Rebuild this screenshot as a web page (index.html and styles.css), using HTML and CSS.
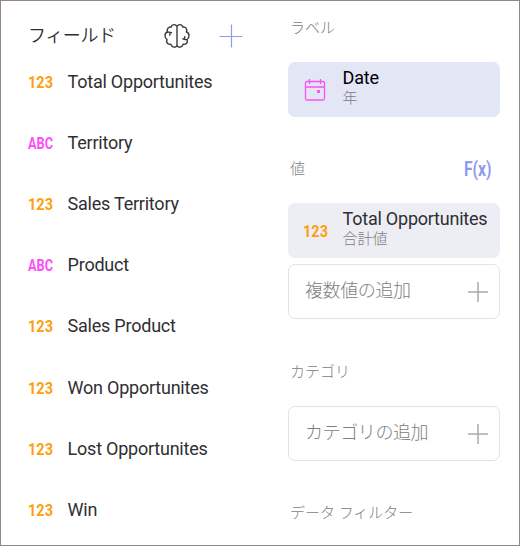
FILE: index.html
```html
<!DOCTYPE html>
<html lang="ja">
<head>
<meta charset="utf-8">
<title>フィールド</title>
<link rel="stylesheet" href="styles.css">
</head>
<body>
<main class="panel">
  <section class="fields">
    <header class="fields-header">
      <h1 class="title">フィールド</h1>
      <svg class="brain" viewBox="0 0 26 26"><path d="M13 3.500v19M13 3.500C11.500.8 8 1 7.200 4 4.500 3.500 2.500 6 3.500 9 .3 10 .2 14.500 3 16.500 1.800 19.500 4 21.800 6.800 21.300 8 24.800 12 25 13 22.500M13 3.500C14.500.8 18 1 18.800 4c2.700-.5 4.700 2 3.700 5 3.200 1 3.300 5.500.5 7.500 1.200 3-1 5.300-3.800 4.800-1.200 3.500-5.200 3.700-6.200 1.200M3.500 9.300c1.200-.3 2.500-.3 4 .4M5.800 12.300l.2-2.800M23 16.500c-1.400.3-3 .2-4.200-.8M20.500 16.300l.3-2.500"/></svg>
      <svg class="plus accent" viewBox="0 0 24 24"><path d="M12.500 .5v23M.5 12.500h23"/></svg>
    </header>
    <ul class="field-list">
      <li class="field"><svg class="badge num" viewBox="0 0 26 18"><text x="0" y="15" textLength="25" lengthAdjust="spacingAndGlyphs">123</text></svg><span>Total Opportunites</span></li>
      <li class="field"><svg class="badge abc" viewBox="0 0 26 18"><text x="0" y="15" textLength="25" lengthAdjust="spacingAndGlyphs">ABC</text></svg><span>Territory</span></li>
      <li class="field"><svg class="badge num" viewBox="0 0 26 18"><text x="0" y="15" textLength="25" lengthAdjust="spacingAndGlyphs">123</text></svg><span>Sales Territory</span></li>
      <li class="field"><svg class="badge abc" viewBox="0 0 26 18"><text x="0" y="15" textLength="25" lengthAdjust="spacingAndGlyphs">ABC</text></svg><span>Product</span></li>
      <li class="field"><svg class="badge num" viewBox="0 0 26 18"><text x="0" y="15" textLength="25" lengthAdjust="spacingAndGlyphs">123</text></svg><span>Sales Product</span></li>
      <li class="field"><svg class="badge num" viewBox="0 0 26 18"><text x="0" y="15" textLength="25" lengthAdjust="spacingAndGlyphs">123</text></svg><span>Won Opportunites</span></li>
      <li class="field"><svg class="badge num" viewBox="0 0 26 18"><text x="0" y="15" textLength="25" lengthAdjust="spacingAndGlyphs">123</text></svg><span>Lost Opportunites</span></li>
      <li class="field"><svg class="badge num" viewBox="0 0 26 18"><text x="0" y="15" textLength="25" lengthAdjust="spacingAndGlyphs">123</text></svg><span>Win</span></li>
    </ul>
  </section>
  <section class="config">
    <div class="group">
      <h2 class="label">ラベル</h2>
      <div class="card date">
        <svg class="calendar" viewBox="0 0 22 24"><rect x="1.500" y="3.500" width="19" height="18.500" rx="1.500"/><path d="M1.500 9h19M5.500 1v5M16.500 1v5"/><rect class="dot" x="13" y="12" width="3" height="3" rx=".5"/></svg>
        <div class="info"><strong>Date</strong><small>年</small></div>
      </div>
    </div>
    <div class="group">
      <div class="label-row"><h2 class="label">値</h2>
        <svg class="formula" viewBox="0 0 28 24"><text x="0" y="18.500" textLength="27.500" lengthAdjust="spacingAndGlyphs">F(x)</text></svg></div>
      <div class="card value">
        <svg class="badge num" viewBox="0 0 26 18"><text x="0" y="15" textLength="25" lengthAdjust="spacingAndGlyphs">123</text></svg>
        <div class="info"><strong>Total Opportunites</strong><small>合計値</small></div>
      </div>
      <div class="card add stacked"><span>複数値の追加</span><svg class="plus" viewBox="0 0 20 20"><path d="M10 0v20M0 10h20"/></svg></div>
    </div>
    <div class="group">
      <h2 class="label">カテゴリ</h2>
      <div class="card add"><span>カテゴリの追加</span><svg class="plus" viewBox="0 0 20 20"><path d="M10 0v20M0 10h20"/></svg></div>
    </div>
    <div class="group">
      <h2 class="label">データ フィルター</h2>
    </div>
  </section>
</main>
</body>
</html>
```
FILE: styles.css
```css
* { box-sizing: border-box; }
body { margin: 0; font-family: Roboto, "Noto Sans CJK JP", sans-serif; color: #2f2f33; }
.panel { display: flex; width: 520px; height: 546px; overflow: hidden; background: #fff; border: 1px solid #968390; }
.fields { width: 287px; padding: 20px 0 0 27px; }
.fields-header { display: flex; align-items: center; height: 30px; }
.title { width: 136px; margin: 0; font-size: 18px; line-height: 30px; font-weight: 350; letter-spacing: -.4px; white-space: nowrap; }
.brain { width: 26px; height: 26px; fill: none; stroke: #39393d; stroke-width: 1.400; stroke-linecap: round; stroke-linejoin: round; }
.plus { width: 20px; height: 20px; fill: none; stroke: #aaa; stroke-width: 1.500; }
.plus.accent { width: 24px; height: 24px; margin-left: 29px; stroke: #8c9ded; stroke-width: 1.200; }
.field-list { list-style: none; margin: 0; padding: 0; }
.field { display: flex; align-items: center; height: 61.2px; font-size: 18px; line-height: 22px; letter-spacing: -.23px; }
.badge { width: 26px; height: 18px; margin-right: 13.6px; flex: none; font-size: 17px; font-weight: 700; letter-spacing: 0; overflow: visible; }
.num { fill: #ff9f0f; }
.abc { fill: #fb50f8; }
.config { width: 212px; padding-top: 15px; }
.group { height: 141px; }
.group:nth-child(2) { height: 203px; }
.label { margin: 0; padding-left: 2px; height: 24px; font-size: 15px; line-height: 24px; font-weight: 300; color: #808080; }
.label-row { display: flex; justify-content: space-between; height: 24px; padding-right: 8px; }
.formula { width: 28px; height: 24px; fill: #8c9df0; font-size: 20px; font-weight: 700; overflow: visible; }
.card { display: flex; align-items: center; height: 55px; margin-top: 22px; border-radius: 7px; }
.date { background: #e3e6f5; padding-left: 16px; }
.date strong { color: #000; }
.value { background: #edeef4; padding-left: 15px; }
.add { justify-content: space-between; padding: 0 11px 0 16px; border: 1px solid #e3e3e3; font-size: 18px; font-weight: 300; letter-spacing: -.4px; color: #808080; }
.add span { margin-top: -5px; }
.stacked { margin-top: 6px; }
.calendar { width: 22px; height: 24px; margin-right: 16.6px; fill: none; stroke: #fb50f8; stroke-width: 1.300; }
.calendar .dot { fill: #fb50f8; stroke: none; }
.info { display: flex; flex-direction: column; margin-top: -4px; }
.info strong { font-size: 18px; line-height: 22px; font-weight: 400; letter-spacing: -.23px; white-space: nowrap; }
.info small { font-size: 15px; line-height: 19px; font-weight: 300; color: #808080; }
```
